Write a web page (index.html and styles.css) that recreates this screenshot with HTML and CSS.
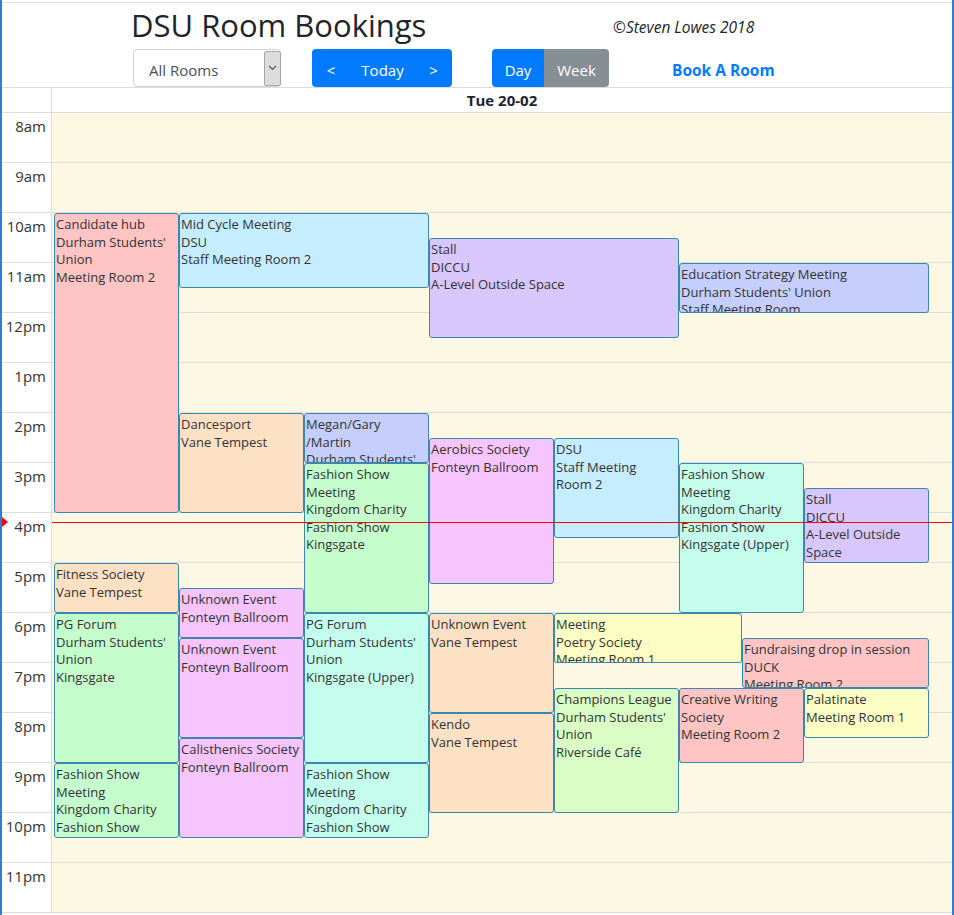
FILE: index.html
```html
<!DOCTYPE html>
<html lang="en">
<head>
<meta charset="utf-8">
<title>DSU Room Bookings</title>
<link rel="stylesheet" href="styles.css">
</head>
<body>
<div class="page">
  <header class="top">
    <div class="title-row">
      <h1 class="title">DSU Room Bookings</h1>
      <p class="copy">©Steven Lowes 2018</p>
    </div>
    <div class="controls">
      <div class="select-wrap">
        <select class="room-select"><option>All Rooms</option></select>
        <span class="select-arrow"><svg width="9" height="6" viewBox="0 0 9 6"><path d="M1 1 L4.5 4.5 L8 1" fill="none" stroke="#555" stroke-width="1.1"/></svg></span>
      </div>
      <div class="btn-group nav-group">
        <button class="btn btn-primary btn-prev">&lt;</button>
        <button class="btn btn-primary btn-today">Today</button>
        <button class="btn btn-primary btn-next">&gt;</button>
      </div>
      <div class="btn-group view-group">
        <button class="btn btn-primary btn-day">Day</button>
        <button class="btn btn-secondary btn-week">Week</button>
      </div>
      <a class="book" href="#">Book A Room</a>
    </div>
  </header>

  <div class="cal">
    <div class="cal-head">
      <div class="gutter-head"></div>
      <div class="day-head">Tue 20-02</div>
    </div>
    <div class="cal-body">
      <div class="slot hour"><div class="time">8am</div><div class="day"></div></div>
      <div class="slot half"><div class="time"></div><div class="day"></div></div>
      <div class="slot hour"><div class="time">9am</div><div class="day"></div></div>
      <div class="slot half"><div class="time"></div><div class="day"></div></div>
      <div class="slot hour"><div class="time">10am</div><div class="day"></div></div>
      <div class="slot half"><div class="time"></div><div class="day"></div></div>
      <div class="slot hour"><div class="time">11am</div><div class="day"></div></div>
      <div class="slot half"><div class="time"></div><div class="day"></div></div>
      <div class="slot hour"><div class="time">12pm</div><div class="day"></div></div>
      <div class="slot half"><div class="time"></div><div class="day"></div></div>
      <div class="slot hour"><div class="time">1pm</div><div class="day"></div></div>
      <div class="slot half"><div class="time"></div><div class="day"></div></div>
      <div class="slot hour"><div class="time">2pm</div><div class="day"></div></div>
      <div class="slot half"><div class="time"></div><div class="day"></div></div>
      <div class="slot hour"><div class="time">3pm</div><div class="day"></div></div>
      <div class="slot half"><div class="time"></div><div class="day"></div></div>
      <div class="slot hour"><div class="time">4pm</div><div class="day"></div></div>
      <div class="slot half"><div class="time"></div><div class="day"></div></div>
      <div class="slot hour"><div class="time">5pm</div><div class="day"></div></div>
      <div class="slot half"><div class="time"></div><div class="day"></div></div>
      <div class="slot hour"><div class="time">6pm</div><div class="day"></div></div>
      <div class="slot half"><div class="time"></div><div class="day"></div></div>
      <div class="slot hour"><div class="time">7pm</div><div class="day"></div></div>
      <div class="slot half"><div class="time"></div><div class="day"></div></div>
      <div class="slot hour"><div class="time">8pm</div><div class="day"></div></div>
      <div class="slot half"><div class="time"></div><div class="day"></div></div>
      <div class="slot hour"><div class="time">9pm</div><div class="day"></div></div>
      <div class="slot half"><div class="time"></div><div class="day"></div></div>
      <div class="slot hour"><div class="time">10pm</div><div class="day"></div></div>
      <div class="slot half"><div class="time"></div><div class="day"></div></div>
      <div class="slot hour"><div class="time">11pm</div><div class="day"></div></div>
      <div class="slot half"><div class="time"></div><div class="day"></div></div>

      <div class="now-arrow" style="top:405px"></div>

      <div class="events">
        <div class="ev pink" style="top:101px;left:2px;width:125px;height:300px"><div>Candidate hub</div><div>Durham Students'</div><div>Union</div><div>Meeting Room 2</div></div>
        <div class="ev blue" style="top:101px;left:127px;width:250px;height:75px"><div>Mid Cycle Meeting</div><div>DSU</div><div>Staff Meeting Room 2</div></div>
        <div class="ev lav" style="top:126px;left:377px;width:250px;height:100px"><div>Stall</div><div>DICCU</div><div>A-Level Outside Space</div></div>
        <div class="ev peri" style="top:151px;left:627px;width:250px;height:50px"><div>Education Strategy Meeting</div><div>Durham Students' Union</div><div>Staff Meeting Room</div></div>
        <div class="ev peach" style="top:301px;left:127px;width:125px;height:100px"><div>Dancesport</div><div>Vane Tempest</div></div>
        <div class="ev peri" style="top:301px;left:252px;width:125px;height:50px"><div>Megan/Gary</div><div>/Martin</div><div>Durham Students'</div><div>Union</div></div>
        <div class="ev green" style="top:351px;left:252px;width:125px;height:150px"><div>Fashion Show</div><div>Meeting</div><div>Kingdom Charity</div><div>Fashion Show</div><div>Kingsgate</div></div>
        <div class="ev violet" style="top:326px;left:377px;width:125px;height:146px"><div>Aerobics Society</div><div>Fonteyn Ballroom</div></div>
        <div class="ev blue" style="top:326px;left:502px;width:125px;height:100px"><div>DSU</div><div>Staff Meeting</div><div>Room 2</div></div>
        <div class="ev mint" style="top:351px;left:627px;width:125px;height:150px"><div>Fashion Show</div><div>Meeting</div><div>Kingdom Charity</div><div>Fashion Show</div><div>Kingsgate (Upper)</div></div>
        <div class="ev lav" style="top:376px;left:752px;width:125px;height:75px"><div>Stall</div><div>DICCU</div><div>A-Level Outside</div><div>Space</div></div>
        <div class="ev peach" style="top:451px;left:2px;width:125px;height:50px"><div>Fitness Society</div><div>Vane Tempest</div></div>
        <div class="ev violet" style="top:476px;left:127px;width:125px;height:50px"><div>Unknown Event</div><div>Fonteyn Ballroom</div></div>
        <div class="ev green" style="top:501px;left:2px;width:125px;height:150px"><div>PG Forum</div><div>Durham Students'</div><div>Union</div><div>Kingsgate</div></div>
        <div class="ev violet" style="top:526px;left:127px;width:125px;height:100px"><div>Unknown Event</div><div>Fonteyn Ballroom</div></div>
        <div class="ev mint" style="top:501px;left:252px;width:125px;height:150px"><div>PG Forum</div><div>Durham Students'</div><div>Union</div><div>Kingsgate (Upper)</div></div>
        <div class="ev peach" style="top:501px;left:377px;width:125px;height:100px"><div>Unknown Event</div><div>Vane Tempest</div></div>
        <div class="ev yellow" style="top:501px;left:502px;width:188px;height:50px"><div>Meeting</div><div>Poetry Society</div><div>Meeting Room 1</div></div>
        <div class="ev pink" style="top:526px;left:690px;width:187px;height:50px"><div>Fundraising drop in session</div><div>DUCK</div><div>Meeting Room 2</div></div>
        <div class="ev peach" style="top:601px;left:377px;width:125px;height:100px"><div>Kendo</div><div>Vane Tempest</div></div>
        <div class="ev lime" style="top:576px;left:502px;width:125px;height:125px"><div>Champions League</div><div>Durham Students'</div><div>Union</div><div>Riverside Café</div></div>
        <div class="ev pink" style="top:576px;left:627px;width:125px;height:75px"><div>Creative Writing</div><div>Society</div><div>Meeting Room 2</div></div>
        <div class="ev yellow" style="top:576px;left:752px;width:125px;height:50px"><div>Palatinate</div><div>Meeting Room 1</div></div>
        <div class="ev violet" style="top:626px;left:127px;width:125px;height:100px"><div>Calisthenics Society</div><div>Fonteyn Ballroom</div></div>
        <div class="ev green" style="top:651px;left:2px;width:125px;height:75px"><div>Fashion Show</div><div>Meeting</div><div>Kingdom Charity</div><div>Fashion Show</div></div>
        <div class="ev mint" style="top:651px;left:252px;width:125px;height:75px"><div>Fashion Show</div><div>Meeting</div><div>Kingdom Charity</div><div>Fashion Show</div></div>

        <div class="now-line" style="top:410px"></div>
      </div>
    </div>
  </div>
</div>
</body>
</html>
```

FILE: styles.css
```css
* { box-sizing: border-box; }

html, body {
  margin: 0;
  padding: 0;
  background: #fff;
}

body {
  width: 954px;
  height: 915px;
  overflow: hidden;
  font-family: "Open Sans", "Noto Sans", sans-serif;
  color: #212529;
}

.page {
  height: 915px;
  padding-top: 2px;
  border-left: 2px solid #2b7fdc;
  border-right: 2px solid #2b7fdc;
}

.top {
  border-top: 1px solid #dee2e6;
}

.title-row {
  display: flex;
  align-items: flex-start;
  height: 46px;
  padding-left: 129px;
}

.title {
  margin: 2px 0 0 0;
  flex: 0 0 482px;
  font-size: 31px;
  line-height: 40px;
  font-weight: 400;
  color: #212529;
}

.copy {
  margin: 14px 0 0 0;
  font-size: 15.5px;
  line-height: 20px;
  font-style: italic;
  color: #212529;
}

.controls {
  display: flex;
  align-items: center;
  height: 38px;
  padding-left: 131px;
}

.select-wrap {
  display: flex;
  align-items: center;
  width: 148px;
  height: 38px;
  border: 1px solid #ced4da;
  border-radius: 4px;
  background: #fff;
}

.room-select {
  appearance: none;
  -webkit-appearance: none;
  flex: 1;
  height: 36px;
  border: 0;
  background: transparent;
  padding: 3px 0 0 15px;
  font-family: inherit;
  font-size: 15px;
  color: #495057;
  outline: none;
}

.select-arrow {
  display: flex;
  align-items: center;
  justify-content: center;
  width: 17px;
  height: 35px;
  margin-right: -1px;
  background: #dcdcdc;
  border: 1px solid #a6a6a6;
  border-radius: 2px;
}

.btn-group {
  display: flex;
  height: 38px;
  border-radius: 4px;
  overflow: hidden;
}

.nav-group { margin-left: 31px; }
.view-group { margin-left: 40px; }

.btn {
  height: 38px;
  border: 0;
  padding: 3px 0 0 0;
  font-family: inherit;
  font-size: 15px;
  color: #fff;
  cursor: pointer;
}

.btn-primary { background: #007bff; }
.btn-secondary { background: #868e96; }

.btn-prev { width: 38px; }
.btn-today { width: 65px; }
.btn-next { width: 37px; }
.btn-day { width: 52px; }
.btn-week { width: 65px; }

.book {
  margin: 3px 0 0 63px;
  font-size: 15.5px;
  font-weight: 700;
  color: #007bff;
  text-decoration: none;
}

/* calendar */
.cal {
  border-top: 1px solid #ddd;
  border-bottom: 1px solid #ddd;
  width: 950px;
}

.cal-head {
  display: grid;
  grid-template-columns: 50px 900px;
  height: 24px;
}

.gutter-head {
  border-right: 1px solid #ddd;
}

.day-head {
  text-align: center;
  font-weight: 700;
  font-size: 15px;
  line-height: 24px;
  color: #212529;
}

.cal-body {
  position: relative;
}

.slot {
  display: grid;
  grid-template-columns: 50px 900px;
  height: 25px;
}

.slot.hour { border-top: 1px solid #ddd; }
.slot.half { border-top: 1px dotted #d6d6d6; }

.time {
  border-right: 1px solid #ddd;
  background: #fff;
  text-align: right;
  padding-right: 5px;
  font-size: 15px;
  line-height: 26px;
  color: #333;
}

.day {
  background: #fcf8e3;
}

.now-arrow {
  position: absolute;
  left: 0;
  width: 0;
  height: 0;
  border-left: 6px solid #f00;
  border-top: 5px solid transparent;
  border-bottom: 5px solid transparent;
}

.events {
  position: absolute;
  top: 0;
  bottom: 0;
  left: 50px;
  width: 900px;
}

.ev {
  position: absolute;
  overflow: hidden;
  border: 1px solid #3a87ad;
  border-radius: 3px;
  padding: 2px 1px 0 1px;
  font-size: 13px;
  line-height: 17.5px;
  color: #333;
}

.ev div {
  white-space: nowrap;
}

.pink { background: #ffc5c5; }
.blue { background: #c5edfd; }
.lav { background: #d7c7fd; }
.peri { background: #c5cefd; }
.peach { background: #fde1c5; }
.green { background: #c5fdcc; }
.violet { background: #f6c5fd; }
.mint { background: #c5fded; }
.yellow { background: #fbfdc5; }
.lime { background: #dafdc5; }

.now-line {
  position: absolute;
  left: 0;
  right: 0;
  height: 1px;
  background: #f00;
}
```
